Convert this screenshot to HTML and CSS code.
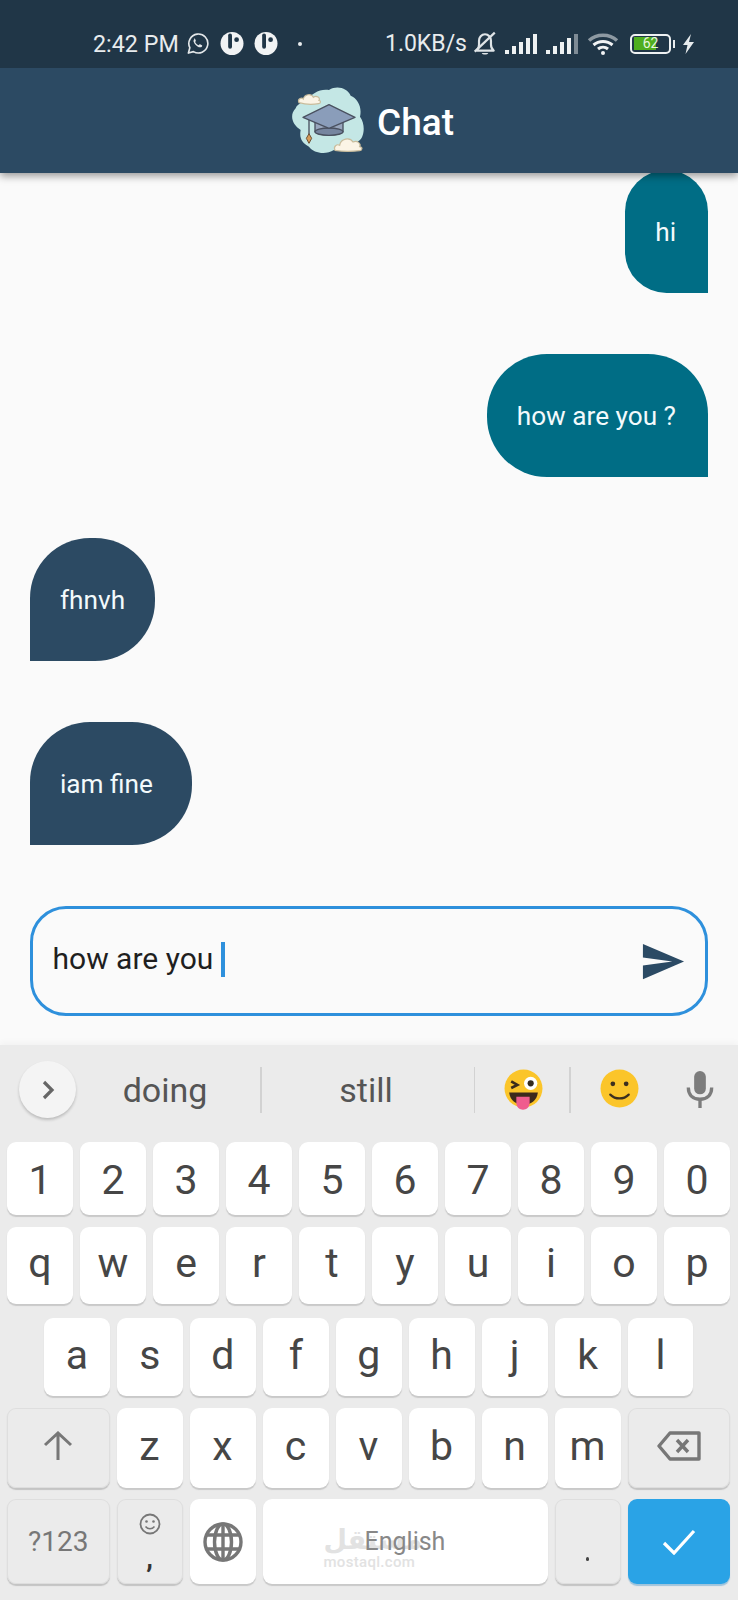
FILE: index.html
```html
<!DOCTYPE html>
<html lang="en">
<head>
<meta charset="utf-8">
<title>Chat</title>
<link rel="stylesheet" href="styles.css">
</head>
<body>
<div class="phone">
  <header class="status">
    <div class="status-group">
      <span class="status-text time">2:42 PM</span>
      <svg class="ic-wa" viewBox="0 0 24 24"><path d="M2.500 22l1.500-5.600A9.900 9.900 0 1 1 7.800 20.500z" fill="none" stroke="#e4e8ea" stroke-width="1.700" stroke-linejoin="round"/><path d="M8.800 7.200c-.9.8-1.200 2-.7 3.300 1 2.500 2.800 4.300 5.300 5.300 1.300.5 2.600.2 3.300-.8.4-.6.3-1-.1-1.200l-1.900-.9c-.4-.2-.6 0-.9.3l-.6.7c-1.600-.6-3-1.900-3.700-3.500l.6-.7c.2-.3.3-.5.1-.8l-.8-1.800c-.2-.4-.6-.5-1-.1z" fill="#e4e8ea"/></svg>
      <svg class="ic-app" viewBox="0 0 24 24"><circle cx="12" cy="12" r="12" fill="#f1f3f4"/><rect x="8" y="1.500" width="4" height="16" rx="2" fill="#203647"/><circle cx="16.800" cy="8" r="2.500" fill="#203647"/></svg>
      <svg class="ic-app ic-app2" viewBox="0 0 24 24"><circle cx="12" cy="12" r="12" fill="#f1f3f4"/><rect x="8" y="1.500" width="4" height="16" rx="2" fill="#203647"/><circle cx="16.800" cy="8" r="2.500" fill="#203647"/></svg>
      <span class="status-dot"></span>
    </div>
    <div class="status-group">
      <span class="status-text speed">1.0KB/s</span>
      <svg class="ic-bell" viewBox="0 0 22 23"><path d="M3.500 18c1.500-1.500 2-3 2-5.500V9c0-3.300 2.300-6 5.500-6s5.500 2.700 5.500 6v3.500c0 2.500.5 4 2.500 5.500z" fill="none" stroke="#dfe4e7" stroke-width="2" stroke-linejoin="round"/><path d="M8 20.200c.6 2 5.400 2 6 0z" fill="#dfe4e7"/><path d="M1.500 19L20 1.500" stroke="#dfe4e7" stroke-width="2"/></svg>
      <svg class="ic-signal" viewBox="0 0 32 20"><rect x="0" y="16" width="4" height="4" fill="#eef1f2"/><rect x="7" y="12" width="4" height="8" fill="#eef1f2"/><rect x="14" y="8" width="4" height="12" fill="#eef1f2"/><rect x="21" y="4" width="4" height="16" fill="#eef1f2"/><rect x="28" y="0" width="4" height="20" fill="#eef1f2"/></svg>
      <svg class="ic-signal ic-signal2" viewBox="0 0 32 20"><rect x="0" y="16" width="4" height="4" fill="#eef1f2"/><rect x="7" y="12" width="4" height="8" fill="#eef1f2"/><rect x="14" y="8" width="4" height="12" fill="#eef1f2"/><rect x="21" y="4" width="4" height="16" fill="#eef1f2"/><rect x="28" y="0" width="4" height="20" fill="#7e8b95"/></svg>
      <svg class="ic-wifi" viewBox="0 0 32 22"><path d="M2 7.500C9.500.5 22.500.5 30 7.500" fill="none" stroke="#8d99a2" stroke-width="3.400"/><path d="M6.500 12c5.500-4.800 13.500-4.800 19 0" fill="none" stroke="#f1f3f4" stroke-width="3"/><path d="M11 16c3-2.500 7-2.500 10 0" fill="none" stroke="#f1f3f4" stroke-width="3"/><circle cx="16" cy="20" r="2" fill="#f1f3f4"/></svg>
      <div class="battery"><span class="battery-level">62</span></div>
      <span class="battery-nub"></span>
      <svg class="ic-bolt" viewBox="0 0 13 20"><path d="M9 0L1 11h4.500L3.500 20 12 8H7z" fill="#e8ecee"/></svg>
    </div>
  </header>

  <div class="appbar">
    <svg class="logo" viewBox="30 36 234 204">
      <path d="M150 45C175 30 205 40 215 62 235 70 250 95 243 125 262 150 255 195 235 200 225 225 190 230 165 225 140 240 105 235 90 215 70 205 60 190 65 165 40 150 30 120 50 100 55 85 75 80 85 78 95 55 125 40 150 45Z" fill="#c4e7e5"/>
      <path d="M60 83c-6-12 8-16 13-11 3-14 24-18 30-5 10-7 22 2 17 9 6 1 6 9-1 10-18 3-42 2-59-3z" fill="#fbf4e6" stroke="#c9bc9c" stroke-width="3.500"/>
      <path d="M168 226c-6-12 6-20 14-15 3-20 30-26 40-10 14-6 25 6 20 14 10 2 8 11 0 12-24 3-52 3-74-1z" fill="#fbf4e6" stroke="#c9bc9c" stroke-width="3.500"/>
      <path d="M108 125V170c10 14 74 14 84 0V125z" fill="#98a6bd" stroke="#4a5160" stroke-width="4"/>
      <ellipse cx="150" cy="170" rx="42" ry="11" fill="#76859f" stroke="#4a5160" stroke-width="4"/>
      <path d="M72 127L150 89l78 38-78 33z" fill="#8a9dba" stroke="#4a5160" stroke-width="4" stroke-linejoin="round"/>
      <path d="M90 135V178" stroke="#4a5160" stroke-width="4"/>
      <path d="M90 176l-8 14 8 15 8-15z" fill="#d59a57" stroke="#6d5236" stroke-width="3"/>
    </svg>
    <h1 class="title">Chat</h1>
  </div>

  <main class="messages">
    <div class="bubble sent">hi</div>
    <div class="bubble sent">how are you ?</div>
    <div class="bubble received">fhnvh</div>
    <div class="bubble received trailing">iam fine</div>
  </main>

  <div class="composer">
    <div class="field">
      <span class="field-text">how are you</span>
      <span class="caret"></span>
      <svg class="send" viewBox="0 0 24 24"><path d="M2.010 21L23 12 2.010 3 2 10l15 2-15 2z" fill="#2b4a64"/></svg>
    </div>
  </div>

  <section class="keyboard">
    <div class="suggest">
      <div class="chevron"><svg class="chevron-ic" viewBox="0 0 14 22"><path d="M3 3l8 8-8 8" fill="none" stroke="#666" stroke-width="3.200"/></svg></div>
      <span class="word word-a">doing</span>
      <span class="sep"></span>
      <span class="word word-b">still</span>
      <span class="sep"></span>
      <svg class="emoji" viewBox="0 0 40 40"><circle cx="20" cy="19" r="18.500" fill="#fbc52a"/><path d="M8 12l6 3.500-6 3" fill="none" stroke="#3a2c1c" stroke-width="2.600"/><circle cx="27" cy="14" r="6.500" fill="#fff"/><circle cx="27" cy="14" r="3" fill="#332a20"/><path d="M6 23h28c-1 8-7 12-14 12S7 31 6 23z" fill="#3c2a1c"/><path d="M13 27h13v6c0 9-13 9-13 0z" fill="#ef5c8e"/></svg>
      <span class="sep sep-c"></span>
      <svg class="emoji emoji-b" viewBox="0 0 40 40"><circle cx="20" cy="19" r="18.500" fill="#fbc52a"/><circle cx="13.500" cy="14.500" r="2.300" fill="#3c2f1f"/><circle cx="26.500" cy="14.500" r="2.300" fill="#3c2f1f"/><path d="M11 25c5 5 13 5 18 0" fill="none" stroke="#3c2f1f" stroke-width="2.200" stroke-linecap="round"/></svg>
      <svg class="mic" viewBox="0 0 28 38"><rect x="8" y="0" width="12" height="24" rx="6" fill="#7c7c7c"/><path d="M2 17c0 8 5 12 12 12s12-4 12-12" fill="none" stroke="#7c7c7c" stroke-width="3.400"/><rect x="12.300" y="28" width="3.400" height="10" fill="#7c7c7c"/></svg>
    </div>

    <div class="row row-num">
      <div class="key">1</div><div class="key">2</div><div class="key">3</div><div class="key">4</div><div class="key">5</div><div class="key">6</div><div class="key">7</div><div class="key">8</div><div class="key">9</div><div class="key">0</div>
    </div>
    <div class="row row-q">
      <div class="key">q</div><div class="key">w</div><div class="key">e</div><div class="key">r</div><div class="key">t</div><div class="key">y</div><div class="key">u</div><div class="key">i</div><div class="key">o</div><div class="key">p</div>
    </div>
    <div class="row row-a">
      <div class="key">a</div><div class="key">s</div><div class="key">d</div><div class="key">f</div><div class="key">g</div><div class="key">h</div><div class="key">j</div><div class="key">k</div><div class="key">l</div>
    </div>
    <div class="row row-z">
      <div class="key fn wide"><svg class="ic-shift" viewBox="0 0 30 30"><path d="M15 29V2M2 14L15 2l13 12" fill="none" stroke="#777" stroke-width="3"/></svg></div>
      <div class="key">z</div><div class="key">x</div><div class="key">c</div><div class="key">v</div><div class="key">b</div><div class="key">n</div><div class="key">m</div>
      <div class="key fn wide"><svg class="ic-del" viewBox="0 0 44 30"><path d="M13 2h29v26H13L2 15z" fill="none" stroke="#777" stroke-width="3.400" stroke-linejoin="round"/><path d="M20 9l11 12M31 9L20 21" stroke="#777" stroke-width="3.400"/></svg></div>
    </div>
    <div class="row row-b">
      <div class="key fn wide sym">?123</div>
      <div class="key fn comma"><svg class="ic-smile" viewBox="0 0 22 22"><circle cx="11" cy="11" r="9.500" fill="none" stroke="#777" stroke-width="1.800"/><circle cx="7.500" cy="8.500" r="1.300" fill="#777"/><circle cx="14.500" cy="8.500" r="1.300" fill="#777"/><path d="M6.500 13.500c2.500 3 6.500 3 9 0" fill="none" stroke="#777" stroke-width="1.600"/></svg><span class="comma-mark">,</span></div>
      <div class="key"><svg class="ic-globe" viewBox="0 0 40 40"><g fill="none" stroke="#777" stroke-width="3.400"><circle cx="20" cy="20" r="18"/><ellipse cx="20" cy="20" rx="8.500" ry="18"/><path d="M20 2v36M4 13h32M4 27h32"/></g></svg></div>
      <div class="key space">
        <div class="watermark"><span class="wm-ar" dir="rtl" lang="ar">مستقل</span><span class="wm-en">mostaql.com</span></div>
        <span class="space-label">English</span>
      </div>
      <div class="key fn period"><span class="period-dot"></span></div>
      <div class="key wide enter"><svg class="ic-check" viewBox="0 0 34 26"><path d="M2 14l10 10L32 2" fill="none" stroke="#fff" stroke-width="3.200"/></svg></div>
    </div>
  </section>
</div>
</body>
</html>
```
FILE: styles.css
```css
* { box-sizing: border-box; }
html, body { margin: 0; padding: 0; }
body { background: #fafafa; font-family: Roboto, "Noto Sans", sans-serif; }

.phone { width: 738px; height: 1600px; display: flex; flex-direction: column; overflow: hidden; background: #fafafa; }

/* status bar */
.status { height: 68px; flex: none; background: #203647; display: flex; align-items: center; justify-content: space-between; padding: 0 43px 0 93px; position: relative; z-index: 3; }
.status-group { display: flex; align-items: center; height: 26px; margin-top: 19px; }
.status-text { font-size: 23.300px; color: #e8ecee; line-height: 26px; white-space: nowrap; }
.speed { font-size: 23px; }
.ic-wa { width: 23px; height: 23px; margin-left: 7px; }
.ic-app { width: 24px; height: 23px; margin-left: 11px; }
.ic-app2 { margin-left: 10px; }
.status-dot { width: 4px; height: 4px; border-radius: 50%; background: #e8ecee; margin-left: 20px; }
.ic-bell { width: 24px; height: 25px; margin-left: 6px; }
.ic-signal { width: 32px; height: 20px; margin-left: 8px; }
.ic-signal2 { margin-left: 9px; }
.ic-wifi { width: 32px; height: 22px; margin-left: 9px; }
.battery { width: 41px; height: 20px; margin-left: 11px; border: 2.500px solid #eef1f2; border-radius: 5px; display: flex; padding: 1.500px; }
.battery-level { flex: 1; font-size: 14px; line-height: 13px; text-align: center; color: #e8f6dd; background: linear-gradient(90deg, #4fae1f 64%, rgba(0,0,0,0) 64%); }
.battery-nub { width: 2px; height: 8px; background: #e8ecee; margin-left: 2px; }
.ic-bolt { width: 13px; height: 20px; margin-left: 7px; }

/* app bar */
.appbar { height: 105px; flex: none; background: #2c4a63; display: flex; align-items: center; justify-content: center; gap: 10px; padding-left: 5px; position: relative; z-index: 2; box-shadow: 0 3px 8px rgba(0,0,0,.4); }
.logo { width: 78px; height: 68px; }
.title { margin: 0; font-size: 37px; font-weight: 500; color: #fff; line-height: 44px; margin-top: 4px; }

/* messages */
.messages { flex: 1; min-height: 0; margin-top: -3px; padding: 0 30px; display: flex; flex-direction: column; gap: 61px; }
.bubble { height: 123px; padding: 0 30px; display: flex; align-items: center; font-size: 26.200px; color: #f3fafc; flex: none; }
.sent { align-self: flex-end; background: #006d85; border-radius: 60px 60px 0 60px; padding-right: 32px; }
.received { align-self: flex-start; background: #2c4a63; border-radius: 60px 60px 60px 0; }
.trailing { padding-right: 39px; }

/* composer */
.composer { flex: none; height: 139px; padding: 0 30px 29px; }
.field { height: 110px; border: 3.500px solid #2e90dc; border-radius: 36px; display: flex; align-items: center; padding: 0 19px 0 19.500px; }
.field-text { font-size: 30px; color: #1f1f1f; white-space: nowrap; margin-top: -5px; }
.caret { width: 4px; height: 35px; background: #2e90dc; margin-left: 8px; margin-top: -3px; }
.send { width: 47px; height: 47px; margin-left: auto; }

/* keyboard */
.keyboard { flex: none; height: 555px; background: #ebebeb; padding: 0 8px 0 7px; box-shadow: 0 -3px 6px rgba(0,0,0,.03); }
.suggest { height: 97px; display: flex; align-items: center; margin: 0 -8px 0 -7px; padding-bottom: 8px; position: relative; }
.chevron { width: 57px; height: 57px; margin: 0 0 0 19px; border-radius: 50%; background: #f4f4f4; box-shadow: 0 2px 3px rgba(0,0,0,.2); display: flex; align-items: center; justify-content: center; flex: none; }
.chevron-ic { width: 14px; height: 22px; }
.word { font-size: 34px; color: #555; text-align: center; }
.word-a { width: 184px; padding-right: 6px; }
.word-b { width: 212px; padding-right: 3px; }
.sep { width: 1.500px; height: 46px; background: #d2d2d2; flex: none; }
.emoji { width: 41px; height: 41px; margin-left: 28px; flex: none; }
.sep-c { margin-left: 25px; }
.emoji-b { margin-left: 28px; }
.mic { width: 28px; height: 37px; margin-left: 46px; flex: none; }

.row { display: flex; gap: 7px; }
.row-num { height: 73px; }
.row-num .key { padding-top: 2px; }
.row-q { height: 77px; margin-top: 12px; }
.row-q .key, .row-a .key { padding-bottom: 5px; }
.row-a { height: 78px; margin-top: 14px; padding: 0 36.500px 0 37px; }
.row-z { height: 80px; margin-top: 12px; }
.row-z .key { padding-bottom: 4px; }
.row-b { height: 85px; margin-top: 11px; }

.key { flex: 1 1 0; min-width: 0; background: #fff; border-radius: 9px; box-shadow: 0 1.500px 1px #c9c9c9; display: flex; align-items: center; justify-content: center; font-size: 41px; color: #464646; position: relative; }
.fn { background: #ebebeb; box-shadow: 0 1.500px 1px #c4c4c4, 0 0 0 1px #dedede inset; }
.wide { flex: 0 0 102.500px; }
.space { flex: 0 0 285px; }
.enter { background: #2aa3e6; box-shadow: 0 1.500px 1px #9fc4dc; }
.sym { font-size: 28px; color: #777; }
.comma { flex-direction: column; justify-content: flex-start; padding-top: 14px; }
.comma-mark { font-size: 27px; font-weight: 700; color: #333; line-height: 20px; margin-top: 13px; }
.period-dot { width: 3.500px; height: 3.500px; border-radius: 50%; background: #444; position: absolute; left: 31px; top: 58px; }
.ic-shift { width: 30px; height: 30px; }
.ic-del { width: 44px; height: 30px; }
.ic-globe { width: 40px; height: 40px; }
.ic-smile { width: 22px; height: 22px; flex: none; }
.ic-check { width: 34px; height: 26px; }
.space-label { font-size: 25px; color: #888; margin-left: 102px; margin-right: auto; position: relative; z-index: 1; }

/* watermark sits under the space bar label */
.watermark { position: absolute; left: 61px; top: 26px; width: 92px; display: flex; flex-direction: column; align-items: flex-start; color: #e2e2e2; }
.wm-ar { font-family: "DejaVu Sans", sans-serif; font-size: 27px; font-weight: 700; line-height: 30px; }
.wm-en { font-size: 15px; line-height: 14px; letter-spacing: .3px; font-weight: 500; }
```
